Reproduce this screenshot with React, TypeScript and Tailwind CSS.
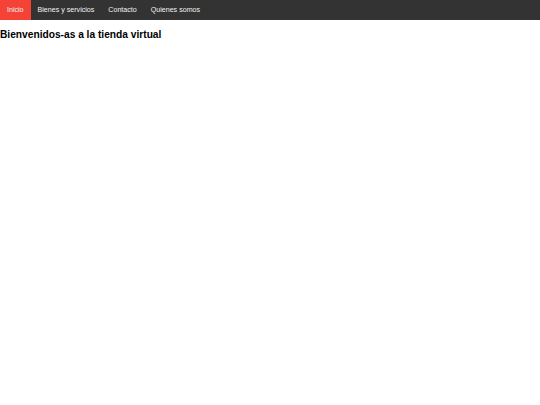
import React from "react";

export default function App() {
  const items = ["Inicio", "Bienes y servicios", "Contacto", "Quienes somos"];
  return (
    <div className="w-[540px] h-[405px] bg-white" style={{ fontFamily: '"Liberation Sans", Arial, sans-serif' }}>
      <ul className="flex h-[20px] bg-[#333333] m-0 p-0 list-none overflow-hidden">
        {items.map((it, i) => (
          <li key={it}>
            <a
              className={`block px-[7px] h-[20px] leading-[20px] text-[7.1px] text-[#f2f2f2] ${i === 0 ? "bg-[#f44336]" : ""}`}
            >
              {it}
            </a>
          </li>
        ))}
      </ul>
      <h2 className="mt-[7px] text-[10.2px] font-bold text-black leading-normal">Bienvenidos-as a la tienda virtual</h2>
    </div>
  );
}
